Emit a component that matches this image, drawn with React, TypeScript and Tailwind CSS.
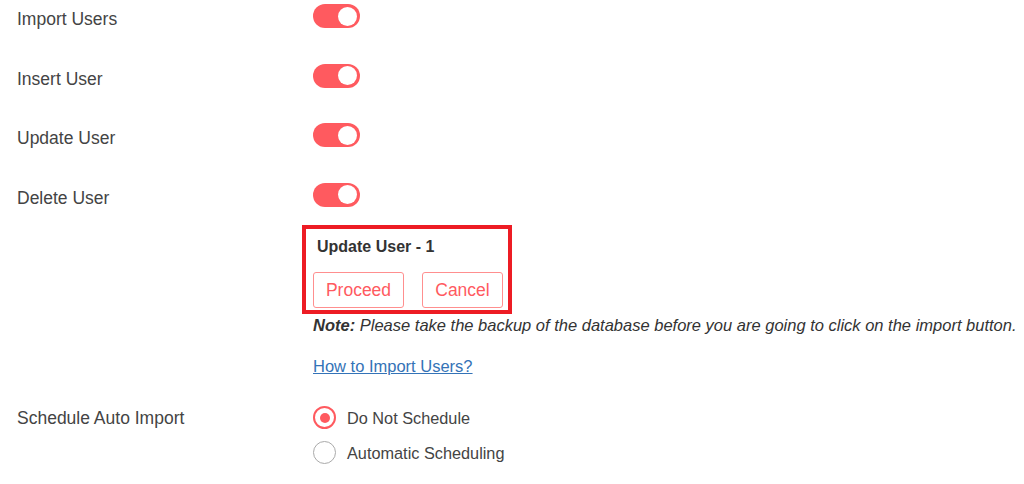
import React, { useState } from "react";

interface ToggleRowProps {
  label: string;
  checked: boolean;
  onChange: (value: boolean) => void;
}

const Toggle: React.FC<{ checked: boolean; onChange: (v: boolean) => void }> = ({ checked, onChange }) => (
  <button
    type="button"
    onClick={() => onChange(!checked)}
    className={`flex items-center w-[47px] h-6 rounded-full px-[3px] ${
      checked ? "bg-[#ff5a5f] justify-end" : "bg-[#ccc] justify-start"
    }`}
  >
    <span className="block w-[19px] h-[19px] rounded-full bg-white" />
  </button>
);

const ToggleRow: React.FC<ToggleRowProps> = ({ label, checked, onChange }) => (
  <div className="flex items-start h-6">
    <div className="w-[296px] mt-[5px] text-[17.5px] leading-[20px] text-[#444]">{label}</div>
    <Toggle checked={checked} onChange={onChange} />
  </div>
);

const Radio: React.FC<{ label: string; checked: boolean; onSelect: () => void }> = ({ label, checked, onSelect }) => (
  <label className="flex items-center gap-[11px] cursor-pointer" onClick={onSelect}>
    <span
      className={`flex items-center justify-center w-[23px] h-[23px] rounded-full ${
        checked ? "border-2 border-[#ff5a5f]" : "border-[1.5px] border-[#aaa]"
      }`}
    >
      {checked && <span className="block w-[10px] h-[10px] rounded-full bg-[#ff5a5f]" />}
    </span>
    <span className="text-[16.3px] leading-[20px] text-[#444]">{label}</span>
  </label>
);

export default function App() {
  const [toggles, setToggles] = useState({ import: true, insert: true, update: true, del: true });
  const [schedule, setSchedule] = useState("none");

  return (
    <div className="w-[1024px] h-[484px] bg-white overflow-hidden pl-[17px] font-['Liberation_Sans',Arial,sans-serif]">
      {/* Toggle rows */}
      <div className="flex flex-col gap-[35.5px] pt-1">
        <ToggleRow label="Import Users" checked={toggles.import} onChange={(v) => setToggles({ ...toggles, import: v })} />
        <ToggleRow label="Insert User" checked={toggles.insert} onChange={(v) => setToggles({ ...toggles, insert: v })} />
        <ToggleRow label="Update User" checked={toggles.update} onChange={(v) => setToggles({ ...toggles, update: v })} />
        <ToggleRow label="Delete User" checked={toggles.del} onChange={(v) => setToggles({ ...toggles, del: v })} />
      </div>

      <div className="ml-[285px] mt-[18.5px]">
        {/* Confirm box */}
        <div className="w-[210px] border-4 border-[#ed1c24] pl-[7px] pt-[9px] pb-[2px]">
          <div className="ml-[4px] text-[16px] leading-[18px] font-bold text-[#333]">Update User - 1</div>
          <div className="flex gap-[18px] mt-[16px]">
            <button className="h-9 w-[91px] border border-[#ff8f8f] rounded-[3px] text-[17.5px] text-[#ff5a5f]">
              Proceed
            </button>
            <button className="h-9 w-[81px] border border-[#ff8f8f] rounded-[3px] text-[17.5px] text-[#ff5a5f]">
              Cancel
            </button>
          </div>
        </div>

        <div className="ml-[11px]">
          <p className="mt-[1px] text-[16.5px] leading-[20px] italic text-[#333] whitespace-nowrap">
            <span className="font-bold">Note:</span> Please take the backup of the database before you are going to
            click on the import button.
          </p>
          <a href="#" className="block mt-[21px] w-fit text-[16.5px] leading-[20px] text-[#3473b7] underline">
            How to Import Users?
          </a>
        </div>
      </div>

      {/* Schedule */}
      <div className="flex items-start mt-[32px]">
        <div className="w-[296px] text-[17.5px] leading-[20px] text-[#444]">Schedule Auto Import</div>
        <div className="flex flex-col gap-[12px] -mt-[2px]">
          <Radio label="Do Not Schedule" checked={schedule === "none"} onSelect={() => setSchedule("none")} />
          <Radio label="Automatic Scheduling" checked={schedule === "auto"} onSelect={() => setSchedule("auto")} />
        </div>
      </div>
    </div>
  );
}
